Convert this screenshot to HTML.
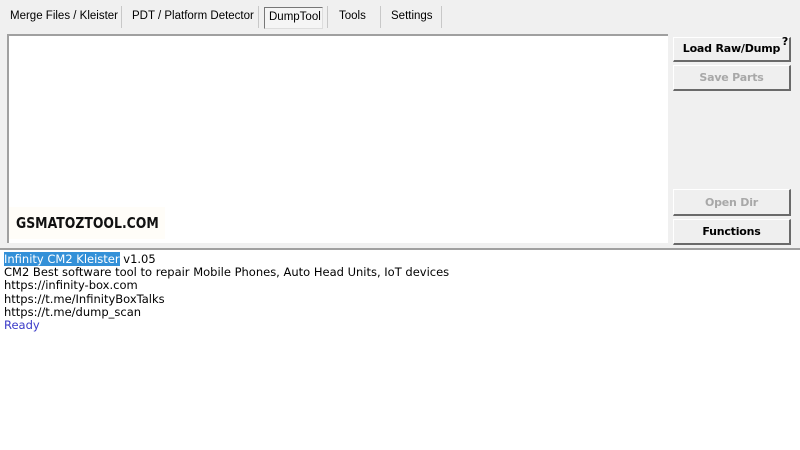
<!DOCTYPE html>
<html><head><style>
body{margin:0;width:800px;height:450px;background:#f0f0f0;position:relative;overflow:hidden;font-family:"Liberation Sans",sans-serif}
.t{position:absolute;top:10px;font-size:11.5px;color:#000}
.sep{position:absolute;top:6px;height:22px;width:1px;background:#c8c8c8}
.panel{position:absolute;left:7px;top:34px;width:659px;height:207px;background:#fff;border-top:2px solid #a0a0a0;border-left:2px solid #a0a0a0}
.btn{position:absolute;left:673px;width:118px;background:#efefef;border:1px solid #fff;border-right:2px solid #6a6a6a;border-bottom:2px solid #6a6a6a;font:bold 11px "DejaVu Sans",sans-serif;letter-spacing:-0.2px;text-align:center;box-sizing:border-box}
.log{position:absolute;left:0;top:248px;width:800px;height:202px;background:#fff;border-top:2px solid #a0a0a0;font:11.5px "DejaVu Sans",sans-serif;line-height:13.2px;padding:3px 0 0 4px;box-sizing:border-box}
</style></head><body>
<div class="t" style="left:10px">Merge Files / Kleister</div>
<div class="sep" style="left:121px"></div>
<div class="t" style="left:132px">PDT / Platform Detector</div>
<div class="sep" style="left:258px"></div>
<div style="position:absolute;left:264px;top:7px;width:57px;height:20px;border:1px solid #777;border-right-color:#ddd;border-bottom-color:#ddd;background:#f5f5f5"></div>
<div class="t" style="left:269px;top:11px">DumpTool</div>
<div class="sep" style="left:327px"></div>
<div class="t" style="left:339px">Tools</div>
<div class="sep" style="left:380px"></div>
<div class="t" style="left:391px">Settings</div>
<div class="sep" style="left:441px"></div>
<div class="panel"></div>
<div style="position:absolute;left:9px;top:207px;width:156px;height:32px;background:#fffdf8"></div>
<div style="position:absolute;left:16px;top:214px;font:bold 15px 'DejaVu Sans',sans-serif;color:#111;transform:scaleX(0.83);transform-origin:0 0;white-space:nowrap">GSMATOZTOOL.COM</div>
<div class="btn" style="top:37px;height:25px;line-height:22px;color:#000">Load Raw/Dump<span style="position:absolute;right:1px;top:-7px;font-size:11px">?</span></div>
<div class="btn" style="top:65px;height:26px;line-height:24px;color:#a8a8a8">Save Parts</div>
<div class="btn" style="top:189px;height:27px;line-height:25px;color:#a8a8a8">Open Dir</div>
<div class="btn" style="top:219px;height:26px;line-height:24px;color:#000">Functions</div>
<div class="log">
<div><span style="background:#3390d8;color:#fff">Infinity CM2 Kleister</span> v1.05</div>
<div>CM2 Best software tool to repair Mobile Phones, Auto Head Units, IoT devices</div>
<div>https://infinity-box.com</div>
<div>https://t.me/InfinityBoxTalks</div>
<div>https://t.me/dump_scan</div>
<div style="color:#3a3ac8">Ready</div>
</div>
</body></html>
